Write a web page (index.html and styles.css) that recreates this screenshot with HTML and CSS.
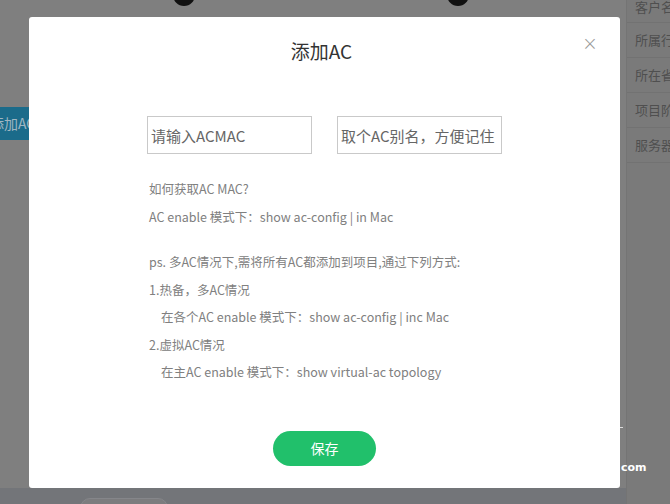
FILE: index.html
```html
<!DOCTYPE html>
<html lang="zh-CN">
<head>
    <meta charset="UTF-8">
    <title>添加AC</title>
    <link rel="stylesheet" href="styles.css">
</head>
<body>
    <div class="page">
        <div class="main">
            <div class="dots">
                <span class="dot"></span>
                <span class="dot"></span>
            </div>
            <div class="add-btn">添加AC</div>
            <div class="bottom-bar"><span class="pill"></span></div>
        </div>
        <ul class="side">
            <li>客户名</li>
            <li>所属行</li>
            <li>所在省</li>
            <li>项目阶</li>
            <li>服务器</li>
        </ul>
        <span class="brand">com</span>
        <span class="tick"></span>
    </div>

    <div class="modal">
        <span class="close">&times;</span>
        <h1>添加AC</h1>

        <div class="fields">
            <input type="text" placeholder="请输入ACMAC">
            <input type="text" placeholder="取个AC别名，方便记住">
        </div>

        <div class="help">
            <p>如何获取AC MAC?</p>
            <p>AC enable 模式下：show ac-config | in Mac</p>
            <p class="gap">ps. 多AC情况下,需将所有AC都添加到项目,通过下列方式:</p>
            <p>1.热备，多AC情况</p>
            <p class="indent">在各个AC enable 模式下：show ac-config | inc Mac</p>
            <p>2.虚拟AC情况</p>
            <p class="indent">在主AC enable 模式下：show virtual-ac topology</p>
        </div>

        <button type="button" class="save">保存</button>
    </div>
</body>
</html>
```

FILE: styles.css
```css
html, body {
    margin: 0;
    padding: 0;
    height: 100%;
    overflow: hidden;
}

body {
    font-family: "Microsoft YaHei", "Noto Sans CJK SC", sans-serif;
    background: #7f7f7f;
}

.page {
    display: flex;
    height: 504px;
}

.main {
    flex: 1;
    display: flex;
    flex-direction: column;
}

.dots {
    display: flex;
    gap: 252px;
    padding-left: 173px;
    height: 17px;
}

.dot {
    width: 22px;
    height: 22px;
    margin-top: -16px;
    border-radius: 50%;
    background: #111;
}

.add-btn {
    margin-top: 90px;
    width: 40px;
    height: 33px;
    line-height: 33px;
    background: #1b6b8a;
    color: #9fb6c2;
    font-size: 14px;
    text-indent: -10px;
    overflow: hidden;
    white-space: nowrap;
}

.bottom-bar {
    margin-top: auto;
    height: 16px;
    background: #737579;
    padding-left: 80px;
}

.pill {
    display: block;
    width: 86px;
    height: 20px;
    margin-top: 10px;
    border-radius: 10px;
    background: #7c7c7e;
    border: 1px solid #85868a;
}

.side {
    width: 43px;
    margin: 0;
    padding: 0;
    list-style: none;
    background: #7a7a7a;
    border-left: 1px solid #747474;
}

.side li {
    height: 34px;
    line-height: 34px;
    padding-left: 8px;
    border-bottom: 1px solid #727272;
    color: #4f4f4f;
    font-size: 13px;
    white-space: nowrap;
    overflow: hidden;
}

.side li:first-child {
    height: 22px;
    line-height: 14px;
}

.brand {
    position: absolute;
    left: 621px;
    top: 461px;
    color: #fff;
    font-family: "DejaVu Sans", sans-serif;
    font-weight: bold;
    font-size: 11px;
}

.tick {
    position: absolute;
    left: 617px;
    top: 427px;
    width: 6px;
    height: 1px;
    background: #ddd;
}

.modal {
    position: absolute;
    left: 29px;
    top: 17px;
    width: 591px;
    height: 471px;
    background: #fff;
    border-radius: 3px;
    box-sizing: border-box;
    padding-top: 20px;
}

.close {
    position: absolute;
    right: 22px;
    top: 15px;
    color: #999;
    font-size: 19px;
    font-family: "DejaVu Sans", sans-serif;
    font-weight: 300;
}

h1 {
    margin: 0;
    text-align: center;
    font-size: 19px;
    font-weight: normal;
    color: #333;
    line-height: 28px;
    padding-right: 6px;
}

.fields {
    display: flex;
    gap: 25px;
    margin-top: 51px;
    padding-left: 118px;
}

.fields input {
    width: 165px;
    height: 38px;
    box-sizing: border-box;
    border: 1px solid #c9c9c9;
    padding: 0 3px;
    font-family: inherit;
    font-size: 15px;
    color: #666;
}

.fields input::placeholder {
    color: #666;
}

.help {
    margin-top: 21px;
    padding-left: 120px;
    color: #808080;
    font-size: 12.5px;
}

.help p {
    margin: 0;
    line-height: 27.5px;
}

.help .gap {
    margin-top: 18px;
}

.help .indent {
    padding-left: 12px;
}

.save {
    display: block;
    margin: 45px auto 0;
    width: 103px;
    height: 35px;
    border: none;
    border-radius: 18px;
    background: #21c06b;
    color: #fff;
    font-family: inherit;
    font-size: 14px;
    cursor: pointer;
}
```
